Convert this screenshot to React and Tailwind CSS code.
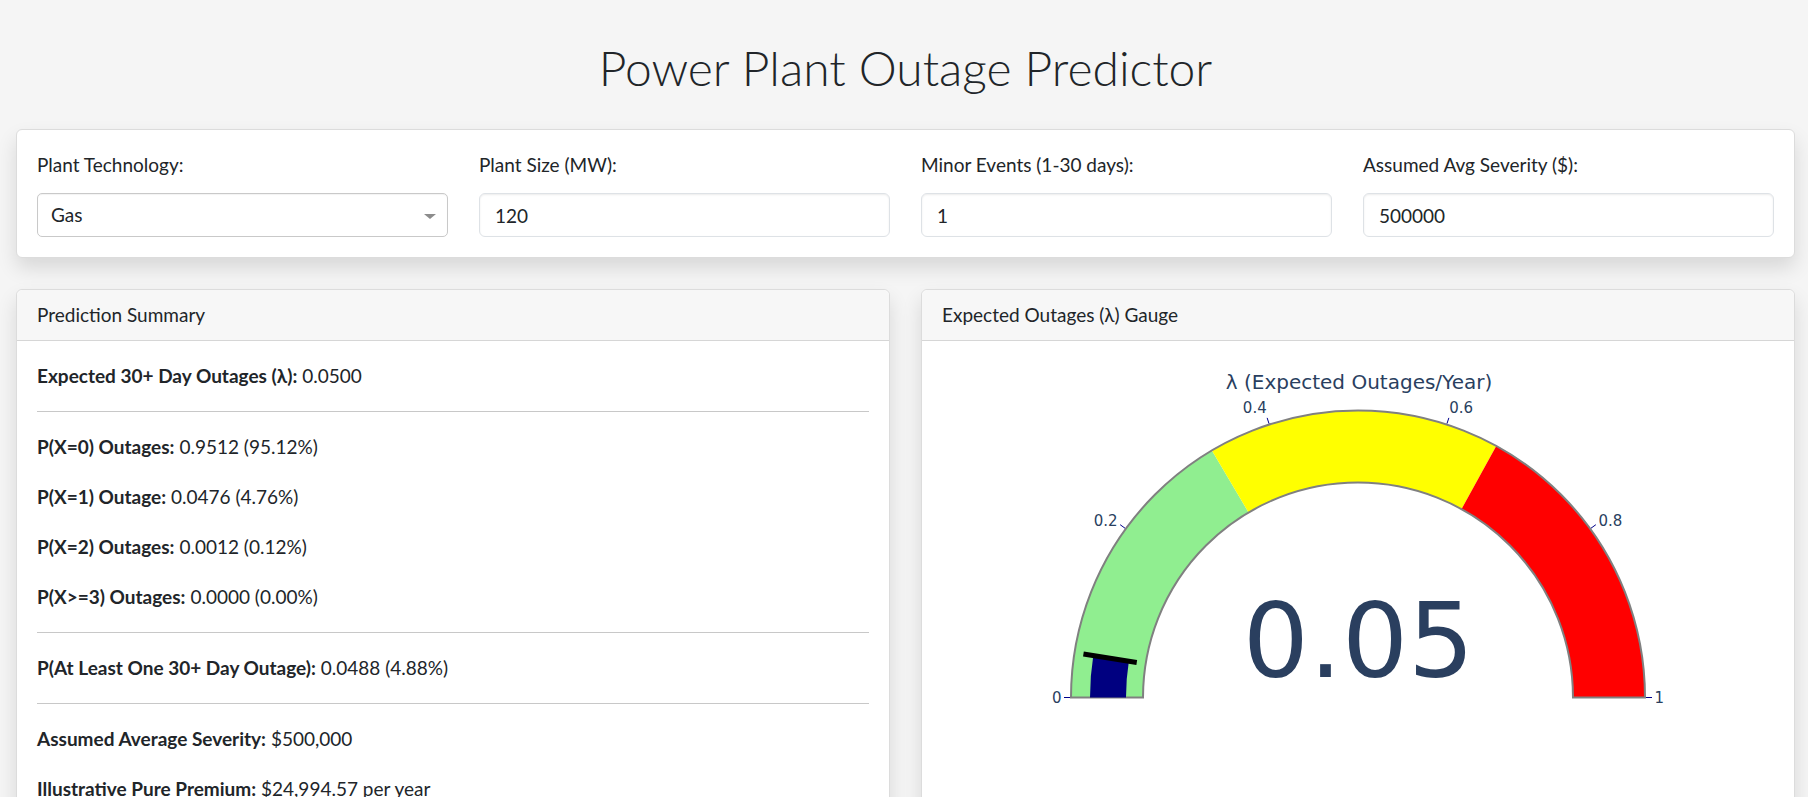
import React from "react";

const FONT = { fontFamily: "Lato, 'Noto Sans', sans-serif" };
const PLOT_FONT = "Verdana, 'DejaVu Sans', sans-serif";

function Gauge() {
  const cx = 416, cy = 336.5, R = 287, r = 215;
  const pt = (v, rho) => {
    const a = Math.PI * (1 - v);
    return [cx + rho * Math.cos(a), cy - rho * Math.sin(a)];
  };
  const sector = (v1, v2, ro, ri) => {
    const [x1, y1] = pt(v1, ro);
    const [x2, y2] = pt(v2, ro);
    const [x3, y3] = pt(v2, ri);
    const [x4, y4] = pt(v1, ri);
    return `M${x1} ${y1} A${ro} ${ro} 0 0 1 ${x2} ${y2} L${x3} ${y3} A${ri} ${ri} 0 0 0 ${x4} ${y4} Z`;
  };
  const ticks = [0, 0.2, 0.4, 0.6, 0.8, 1];
  const labels = [
    { t: "0", x: 119.5, y: 336.5, a: "end" },
    { t: "0.2", x: 175.6, y: 159.7, a: "end" },
    { t: "0.4", x: 312.8, y: 47.4, a: "middle" },
    { t: "0.6", x: 519.2, y: 47.4, a: "middle" },
    { t: "0.8", x: 656.4, y: 159.7, a: "start" },
    { t: "1", x: 712.5, y: 336.5, a: "start" },
  ];
  const [t1x, t1y] = pt(0.05, 278);
  const [t2x, t2y] = pt(0.05, 224);
  return (
    <svg width="833" height="437" viewBox="0 0 833 437" className="block mx-auto">
      <text x="417" y="28" textAnchor="middle" fontFamily={PLOT_FONT} fontSize="20" fill="#2a3f5f">
        λ (Expected Outages/Year)
      </text>
      <path d={sector(0, 0.33, R, r)} fill="#90ee90" />
      <path d={sector(0.33, 0.66, R, r)} fill="#ffff00" />
      <path d={sector(0.66, 1, R, r)} fill="#ff0000" />
      <path d={sector(0, 1, R, r)} fill="none" stroke="#808080" strokeWidth="2" />
      <path d={sector(0, 0.05, 268, 232)} fill="#000080" />
      <line x1={t1x} y1={t1y} x2={t2x} y2={t2y} stroke="#000000" strokeWidth="5" />
      {ticks.map((v) => {
        const [ax, ay] = pt(v, R + 1);
        const [bx, by] = pt(v, R + 7);
        return <line key={v} x1={ax} y1={ay} x2={bx} y2={by} stroke="#00008b" strokeWidth="1" />;
      })}
      {labels.map((l) => (
        <text
          key={l.t}
          x={l.x}
          y={l.y}
          textAnchor={l.a}
          dominantBaseline="central"
          fontFamily={PLOT_FONT}
          fontSize="15"
          fill="#2a3f5f"
        >
          {l.t}
        </text>
      ))}
      <text x="416.5" y="316.4" textAnchor="middle" fontFamily={PLOT_FONT} fontSize="104" fill="#2a3f5f">
        0.05
      </text>
    </svg>
  );
}

function Field({ label, children }) {
  return (
    <div className="flex flex-col">
      <label className="h-[30px] leading-[30px] mb-[13px] text-[19px] text-[#212529]">{label}</label>
      {children}
    </div>
  );
}

function NumInput({ value }) {
  return (
    <input
      type="text"
      defaultValue={value}
      className="h-[44px] w-full rounded-[6px] border border-[#dee2e6] bg-white px-[15px] text-[19px] text-[#212529] shadow-[inset_0_1px_2px_rgba(0,0,0,0.075)] outline-none"
      style={FONT}
    />
  );
}

function Row({ label, value }) {
  return (
    <p className="mb-[20px] leading-[30px]">
      <strong className="font-bold">{label}</strong> {value}
    </p>
  );
}

function Hr() {
  return <div className="my-[20px] h-px bg-[#c8c8c8]" />;
}

export default function App() {
  return (
    <div className="min-h-screen bg-[#f5f5f5] pl-[16px] pr-[13px] text-[19px] text-[#212529]" style={FONT}>
      <h1 className="h-[129px] pt-[38px] text-center text-[48px] font-light leading-[60px] text-[#212529]">
        Power Plant Outage Predictor
      </h1>

      <div className="rounded-[6px] border border-[#dcdcdc] bg-white p-[20px] shadow-[0_10px_20px_rgba(0,0,0,0.12)]">
        <div className="grid grid-cols-4 gap-x-[31px]">
          <Field label="Plant Technology:">
            <div className="relative flex h-[44px] items-center rounded-[5px] border border-[#c9c9c9] bg-white pl-[13px] shadow-[inset_0_1px_1px_rgba(0,0,0,0.05)]">
              <span>Gas</span>
              <span className="absolute right-[11px] top-[20px] h-0 w-0 border-x-[6px] border-t-[5px] border-x-transparent border-t-[#8c8c8c]" />
            </div>
          </Field>
          <Field label="Plant Size (MW):">
            <NumInput value="120" />
          </Field>
          <Field label="Minor Events (1-30 days):">
            <NumInput value="1" />
          </Field>
          <Field label="Assumed Avg Severity ($):">
            <NumInput value="500000" />
          </Field>
        </div>
      </div>

      <div className="mt-[31px] grid grid-cols-2 gap-x-[31px]">
        <div className="rounded-[6px] border border-[#dcdcdc] bg-white shadow-[0_10px_20px_rgba(0,0,0,0.12)]">
          <div className="h-[51px] border-b border-[#d6d6d6] bg-[#f7f7f7] px-[20px] py-[10px] leading-[30px] rounded-t-[6px]">
            Prediction Summary
          </div>
          <div className="p-[20px]">
            <Row label="Expected 30+ Day Outages (λ):" value="0.0500" />
            <Hr />
            <Row label="P(X=0) Outages:" value="0.9512 (95.12%)" />
            <Row label="P(X=1) Outage:" value="0.0476 (4.76%)" />
            <Row label="P(X=2) Outages:" value="0.0012 (0.12%)" />
            <Row label="P(X>=3) Outages:" value="0.0000 (0.00%)" />
            <Hr />
            <Row label="P(At Least One 30+ Day Outage):" value="0.0488 (4.88%)" />
            <Hr />
            <Row label="Assumed Average Severity:" value="$500,000" />
            <Row label="Illustrative Pure Premium:" value="$24,994.57 per year" />
          </div>
        </div>
        <div className="rounded-[6px] border border-[#dcdcdc] bg-white shadow-[0_10px_20px_rgba(0,0,0,0.12)]">
          <div className="h-[51px] border-b border-[#d6d6d6] bg-[#f7f7f7] px-[20px] py-[10px] leading-[30px] rounded-t-[6px]">
            Expected Outages (λ) Gauge
          </div>
          <div className="p-[20px]">
            <Gauge />
          </div>
        </div>
      </div>
    </div>
  );
}
